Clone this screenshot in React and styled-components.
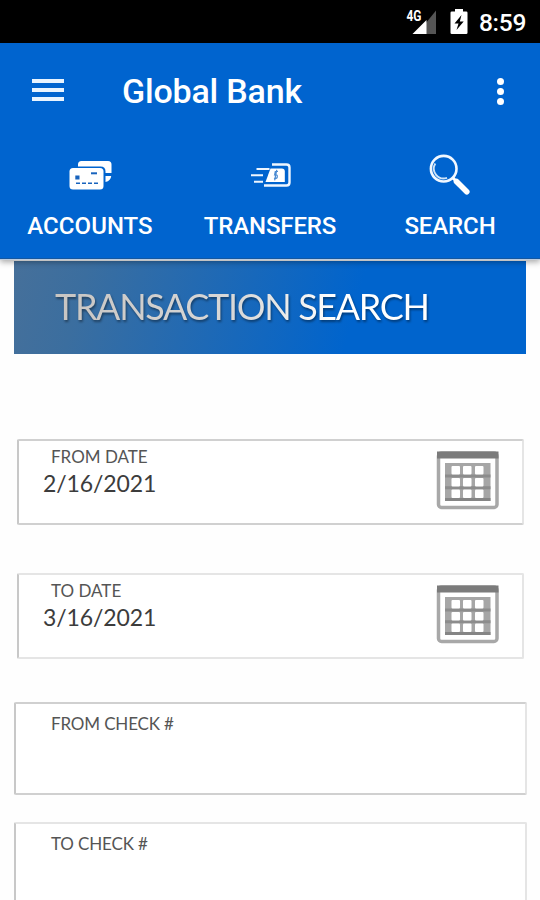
import React from "react";
import styled, { createGlobalStyle } from "styled-components";

const fields = [
  { label: "FROM DATE", value: "2/16/2021", type: "date", gap: 49 },
  { label: "TO DATE", value: "3/16/2021", type: "date", light: true, gap: 44 },
  { label: "FROM CHECK #", type: "check", gap: 27 },
  { label: "TO CHECK #", type: "check", light: true, gap: 27 },
];

const App = () => {
  return (
    <Screen>
      <GlobalStyle />
      <StatusBar>
        <SignalIcon />
        <BatteryIcon />
        <Clock>8:59</Clock>
      </StatusBar>
      <Header>
        <TitleBar>
          <MenuButton aria-label="Menu">
            <MenuLine />
            <MenuLine />
            <MenuLine />
          </MenuButton>
          <AppName>Global Bank</AppName>
          <MoreButton aria-label="More">
            <Dot />
            <Dot />
            <Dot />
          </MoreButton>
        </TitleBar>
        <Tabs>
          <Tab>
            <CardsIcon />
            <TabLabel>ACCOUNTS</TabLabel>
          </Tab>
          <Tab>
            <TransferIcon />
            <TabLabel $spacing="-0.15px">TRANSFERS</TabLabel>
          </Tab>
          <Tab>
            <SearchIcon />
            <TabLabel $spacing="-0.1px">SEARCH</TabLabel>
          </Tab>
        </Tabs>
      </Header>
      <Content>
        <Banner>
          <BannerText>TRANSACTION SEARCH</BannerText>
        </Banner>
        <Form>
          {fields.map((field) => (
            <Field
              key={field.label}
              $type={field.type}
              $light={field.light}
              $gap={field.gap}
            >
              <FieldText $type={field.type}>
                <Label $type={field.type}>{field.label}</Label>
                {field.value && <Value>{field.value}</Value>}
              </FieldText>
              {field.type === "date" && <CalendarIcon />}
            </Field>
          ))}
        </Form>
      </Content>
    </Screen>
  );
};

const SignalIcon = () => (
  <Signal width="32" height="28" viewBox="0 0 32 28">
    <path d="M11 26 30 2.500V26Z" fill="#555" />
    <path d="M6.500 26 20.500 12V26Z" fill="#fff" />
    <text x="0.500" y="12.500" textLength="15" lengthAdjust="spacingAndGlyphs">
      4G
    </text>
  </Signal>
);

const BatteryIcon = () => (
  <Battery width="18" height="27" viewBox="0 0 18 27">
    <path
      d="M5 1h8v2.500h3.200q1.300 0 1.300 1.300v19.900q0 1.300-1.300 1.300H1.800Q.5 26 .5 24.700V4.800Q.5 3.500 1.800 3.500H5Z"
      fill="#fff"
    />
    <path d="M11.500 7 4.500 15.500h4L6.500 22l7.200-8.500H9.800Z" fill="#000" />
  </Battery>
);

const CardsIcon = () => (
  <IconSvg width="44" height="32" viewBox="0 0 44 32">
    <path
      d="M9 6.500V4.500Q9 1 12.500 1H39q3.500 0 3.500 3.500V13h-6v-1.500q0-5-5-5Z"
      fill="#fff"
    />
    <path d="M36.500 16h5.700q-.3 4.700-5.700 6Z" fill="#fff" />
    <rect x="0.500" y="8" width="34" height="21.500" rx="3.500" fill="#fff" />
    <rect x="6.300" y="15.500" width="4.200" height="4" fill="#1763bd" />
    <path d="M22 13.300h6" stroke="#1763bd" strokeWidth="2" />
    <path d="M7 23.300h22" stroke="#1763bd" strokeWidth="1.600" strokeDasharray="4 2" />
  </IconSvg>
);

const TransferIcon = () => (
  <IconSvg width="42" height="32" viewBox="0 0 42 32">
    <g fill="none" stroke="#eef6ff" strokeWidth="2">
      <path d="M22 4.500h14.500q3 0 3 3v15q0 3-3 3H14" strokeWidth="2.400" />
      <path d="M6.500 9h13M1 15.200h12M4 21.800h9" />
    </g>
    <path d="M20.500 8.500h11.300q3 0 3 3V22H15.500Z" fill="#fff" />
    <path
      d="M28 11.500h-2.700l-.7 3.500c2-.6 3 .2 2.700 2-.4 1.500-1.800 1.900-3.300 1.300M26.800 9.800l-2.200 10.500"
      fill="none"
      stroke="#4b8bd2"
      strokeWidth="1.200"
    />
  </IconSvg>
);

const SearchIcon = () => (
  <svg width="42" height="42" viewBox="0 0 42 42">
    <circle cx="14.700" cy="14.700" r="12.800" fill="none" stroke="#f2f8ff" strokeWidth="2.600" />
    <path d="M6.300 9.500A9.800 9.800 0 0 0 18 23.800" fill="none" stroke="#cfe4f8" strokeWidth="1.900" />
    <path d="m24 24 4.500 4.500" stroke="#fff" strokeWidth="3" />
    <path d="m27.500 27.500 10.300 10.300" stroke="#fff" strokeWidth="5.600" strokeLinecap="round" />
  </svg>
);

const CalendarIcon = () => (
  <Calendar width="64" height="62" viewBox="0 0 64 62">
    <rect x="2.500" y="3" width="58.500" height="54.500" rx="3" fill="#fff" stroke="#a8a8a8" strokeWidth="3.500" />
    <path d="M1 1.500h61.500v7H1Z" fill="#7b7b7b" />
    <rect x="9" y="13" width="45.500" height="38" fill="#a6a6a6" />
    <path d="M9 48h45.500v3H9Z" fill="#858585" />
    <path d="M9 26h45.500M9 37.800h45.500" stroke="#8c8c8c" strokeWidth="3" />
    <g fill="#fff">
      {[15.5, 27, 39].map((x) =>
        [16, 28, 39.5].map((y) => (
          <rect key={`${x}-${y}`} x={x} y={y} width="8.500" height="8.500" rx="1" />
        ))
      )}
    </g>
  </Calendar>
);

const GlobalStyle = createGlobalStyle`
  * {
    box-sizing: border-box;
  }
  body {
    margin: 0;
    background-color: #fff;
  }
`;

const Screen = styled.div`
  width: 540px;
  height: 900px;
  overflow: hidden;
  background-color: #fefefe;
  font-family: Lato, sans-serif;
`;

const StatusBar = styled.div`
  height: 43px;
  padding-right: 14px;
  background-color: #000;
  display: flex;
  align-items: center;
  justify-content: flex-end;
`;

const Signal = styled.svg`
  margin-right: 12px;
  text {
    fill: #fff;
    font: 700 14px Roboto, sans-serif;
  }
`;

const Battery = styled.svg`
  margin-right: 11px;
`;

const Clock = styled.span`
  width: 47px;
  color: #fff;
  font: 500 24.500px/30px Roboto, sans-serif;
  letter-spacing: -0.3px;
  white-space: nowrap;
  padding-top: 3px;
`;

const Header = styled.header`
  height: 216px;
  position: relative;
  z-index: 1;
  background-color: #0064cf;
  border-bottom: 1px solid #1457a0;
  box-shadow: 0 1px 0 #b8cbe0, 0 3px 6px rgba(0, 0, 0, 0.35);
  color: #fff;
  font-family: Roboto, sans-serif;
`;

const TitleBar = styled.div`
  height: 96px;
  padding: 0 36px 0 32px;
  display: flex;
  align-items: center;
`;

const MenuButton = styled.button`
  width: 32px;
  height: 22px;
  padding: 0;
  margin-bottom: 2px;
  border: 0;
  background: none;
  display: flex;
  flex-direction: column;
  justify-content: space-between;
`;

const MenuLine = styled.span`
  width: 100%;
  height: 4px;
  background-color: #e9f4ff;
`;

const AppName = styled.h1`
  flex: 1;
  margin: 0 0 0 58px;
  font-size: 34px;
  font-weight: 500;
  line-height: 40px;
  letter-spacing: -0.200px;
`;

const MoreButton = styled.button`
  padding: 0;
  border: 0;
  background: none;
  display: flex;
  flex-direction: column;
  gap: 3px;
`;

const Dot = styled.span`
  width: 7px;
  height: 7px;
  border-radius: 50%;
  background-color: #fff;
`;

const Tabs = styled.nav`
  display: grid;
  grid-template-columns: repeat(3, 180px);
`;

const Tab = styled.div`
  height: 119px;
  display: grid;
  grid-template-rows: 72px 30px;
  place-items: center;
  align-content: start;
`;

const IconSvg = styled.svg`
  margin: 1px 0 0 2px;
`;

const TabLabel = styled.span`
  font-size: 24px;
  font-weight: 500;
  line-height: 30px;
  letter-spacing: ${({ $spacing }) => $spacing || "0.05px"};
`;

const Content = styled.main`
  padding: 2px 14px 0;
`;

const Banner = styled.div`
  height: 93px;
  padding: 0 0 3px 41px;
  display: flex;
  align-items: center;
  background: linear-gradient(105deg, #46709a 0%, #3b6e9f 14%, #0064cd 66%);
`;

const BannerText = styled.h2`
  margin: 0;
  font-size: 36px;
  font-weight: 400;
  line-height: 44px;
  letter-spacing: -1.350px;
  white-space: nowrap;
  color: transparent;
  background: linear-gradient(90deg, #c8c5c2, #d9d9d9 50%, #fff 75%);
  background-clip: text;
  filter: drop-shadow(1px 2px 1px rgba(0, 0, 0, 0.4));
`;

const Form = styled.div`
  padding-top: 85px;
`;

const Field = styled.div`
  height: ${({ $type }) => ($type === "date" ? "86px" : "93px")};
  margin: ${({ $type, $gap }) =>
    $type === "date" ? `0 2px ${$gap - 1}px 3px` : `0 -1px ${$gap}px 0`};
  border: 2px solid ${({ $light }) => ($light ? "#e5e5e5" : "#d0d0d0")};
  border-left-color: #c8c8c8;
  border-right: 2px solid #e5e5e5;
  border-radius: 2px;
  background-color: #fff;
  display: flex;
  justify-content: space-between;
`;

const FieldText = styled.div`
  padding: ${({ $type }) => ($type === "date" ? "5px 0 0 24px" : "9px 0 0 27px")};
  display: flex;
  flex-direction: column;
`;

const Label = styled.label`
  margin-left: 8px;
  color: #555;
  font-size: 17px;
  line-height: 22px;
  letter-spacing: ${({ $type }) => ($type === "date" ? "0" : "-0.150px")};
`;

const Value = styled.span`
  color: #3c3c3c;
  font-size: 23px;
  line-height: 30px;
  letter-spacing: -0.1px;
`;

const Calendar = styled.svg`
  margin: 9px 22px 0 0;
`;

export default App;
